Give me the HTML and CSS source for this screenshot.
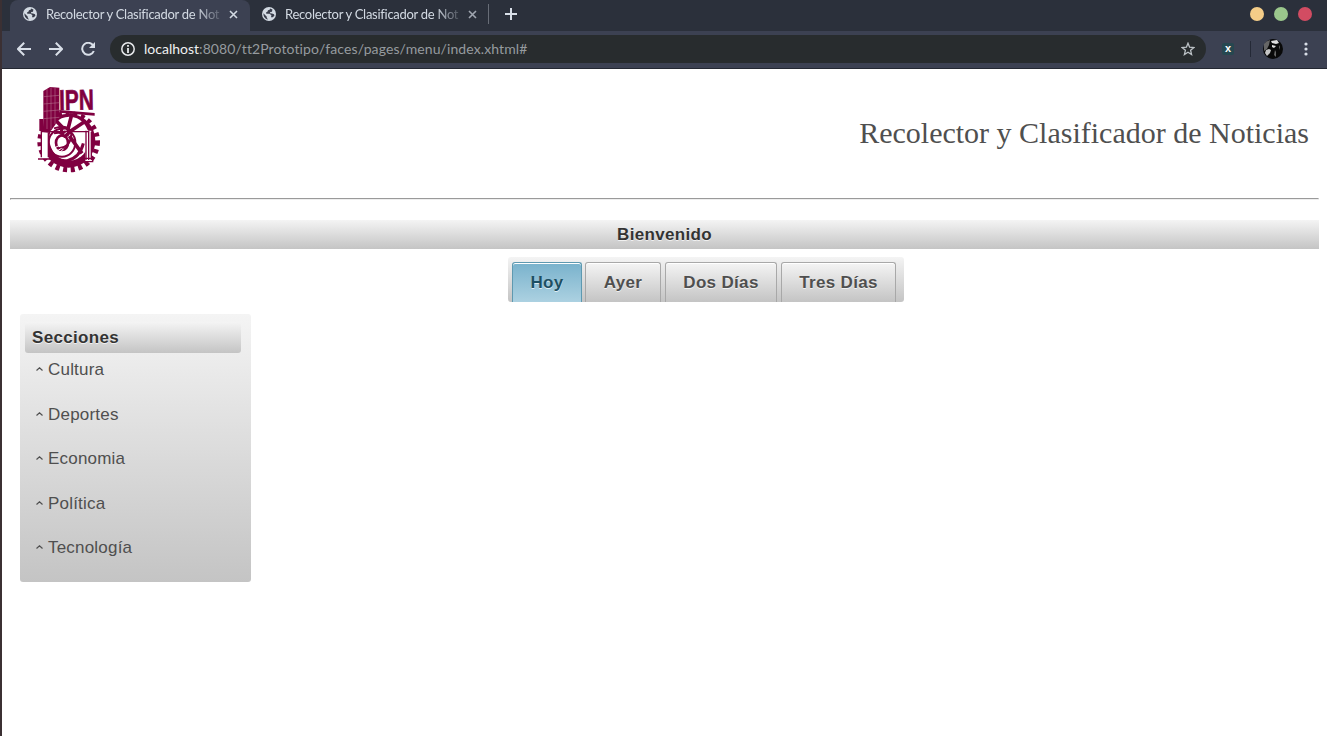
FILE: index.html
```html
<!DOCTYPE html>
<html lang="es">
<head>
<meta charset="utf-8">
<title>Recolector y Clasificador de Noticias</title>
<link rel="stylesheet" href="styles.css">
</head>
<body>
<svg class="defs" width="0" height="0">
  <symbol id="globe" viewBox="0 0 14 14"><circle cx="7" cy="7" r="7" fill="#d3dae3"/><path d="M1.4 6.3 4.8 9.7V11l1.4 1.6C3.2 12.2 1.3 9.8 1.4 6.3ZM8 1.4 7.7 2.7 6 3.3 5.4 4.8 4 5.5 4.3 6.8H7.6L9.4 8.3 9 10.2H10.8L12.4 8.8 12 7.2 10 6.6 8 6.2 8.2 5 10 4.7 10.4 2.4Z" fill="#383c4a"/></symbol>
  <symbol id="close" viewBox="0 0 9 9"><path d="m1 1 7 7M8 1 1 8" stroke="currentColor" stroke-width="1.6"/></symbol>
</svg>
<div class="window">
  <header class="browser">
    <div class="tabstrip">
      <div class="tab active"><svg class="fav"><use href="#globe"/></svg><span class="tab-title">Recolector y Clasificador de Not</span><svg class="close"><use href="#close"/></svg></div>
      <div class="tab"><svg class="fav"><use href="#globe"/></svg><span class="tab-title">Recolector y Clasificador de Not</span><svg class="close"><use href="#close"/></svg></div>
      <span class="tab-line"></span>
      <svg class="plus" viewBox="0 0 12 12"><path d="M6 0v12M0 6h12" stroke="#d9dfe8" stroke-width="2"/></svg>
      <div class="controls"><i class="yellow"></i><i class="green"></i><i class="red"></i></div>
    </div>
    <div class="toolbar">
      <svg class="nav" viewBox="0 0 14 14"><path d="M14 7H1.5M7.2 .8 1 7l6.2 6.2"/></svg>
      <svg class="nav" viewBox="0 0 14 14"><path d="M0 7h12.5M6.8 .8 13 7l-6.2 6.2"/></svg>
      <svg class="nav" viewBox="0 0 14 14"><path d="M12.2 3.5A6 6 0 1 0 12.8 9"/><path d="M14 0v6H8Z" class="tip"/></svg>
      <div class="address">
        <svg class="info" viewBox="0 0 14 14"><circle cx="7" cy="7" r="6.2" fill="none" stroke="#e8eaed" stroke-width="1.5"/><path d="M7 3v1.8M7 6v5" stroke="#e8eaed" stroke-width="1.8"/></svg>
        <span class="url"><b>localhost</b>:8080/tt2Prototipo/faces/pages/menu/index.xhtml#</span>
        <svg class="star" viewBox="0 0 14 14"><path d="m7 1.2 1.6 4 4.3.3-3.3 2.8 1 4.2L7 10.2l-3.6 2.3 1-4.2L1.1 5.5l4.3-.3Z" fill="none" stroke="#bcc2c6" stroke-width="1.3"/></svg>
      </div>
      <span class="ext">x</span>
      <span class="tool-line"></span>
      <svg class="avatar" viewBox="0 0 20 20"><circle cx="10" cy="10" r="10" fill="#090909"/><path d="M1 5Q3 2 7 1L6 6 4 10 1 12Z" fill="#666"/><path d="m8 2 6-1 2 3-3 1-4-1ZM9 6l4 1-2 2-2-1Z" fill="#ddd"/><path d="m3 11 3-1 2 1-1 3-3 3-2-3Z" fill="#c5c5c5"/><path d="m12 11 1 2v5l-2-2ZM16 6l1 2v3l-1-3Z" fill="#666"/></svg>
      <svg class="dots" viewBox="0 0 4 14"><g fill="#d9dfe8"><circle cx="2" cy="2" r="1.6"/><circle cx="2" cy="7" r="1.6"/><circle cx="2" cy="12" r="1.6"/></g></svg>
    </div>
  </header>
  <main class="page">
    <div class="masthead">
      <svg class="logo" viewBox="0 0 240 300">
        <ellipse cx="116" cy="185" rx="86" ry="84" fill="none" stroke="#800040" stroke-width="16" stroke-dasharray="12 11"/>
        <ellipse cx="116" cy="182" rx="80" ry="81" fill="#800040"/>
        <ellipse cx="118" cy="176" rx="60" ry="66" fill="#fff"/>
        <g stroke="#800040" fill="none">
          <path d="M110 155 74 118M112 155 126 100M112 160 168 122M118 168 156 220" stroke-width="11"/>
          <path d="M66 220Q82 246 112 242 150 232 160 190" stroke-width="9"/>
          <ellipse cx="96" cy="188" rx="40" ry="42" stroke-width="6"/>
          <ellipse cx="96" cy="188" rx="18" ry="22" stroke-width="8"/>
          <path d="M72 145Q121 130 124 165 121 202 86 205M72 160Q99 153 105 173" stroke-width="6"/>
        </g>
        <circle cx="105" cy="156" r="16" fill="#800040"/>
        <path d="M99 151q9-5 12 5l-8 6" fill="none" stroke="#fff" stroke-width="3"/>
        <path d="M34 155V236H56V158ZM166 152v92h18v-92Z" fill="#fff"/>
        <path d="M34 155H176V240M168 152V240M184 155V240M34 153V232M55 158V232M24 237H60M149 235H188V245H149Z" fill="none" stroke="#800040" stroke-width="4"/>
        <path d="m40 33 20-12 28 2v94l-24 34H40Z" fill="#800040"/>
        <path d="M51 27v120M63 22v126M75 24v108M40 50l48-4M40 72l48-4M40 94l48-4M40 116l48-4" stroke="#bd8199" stroke-width="1.5"/>
        <path d="M28 117h12l3 36H28ZM88 90 194 99v8L88 98Z" fill="#800040"/>
        <text x="88" y="90" class="logo-text" textLength="104" lengthAdjust="spacingAndGlyphs" transform="rotate(-1 88 90)">IPN</text>
        <path d="m68 207 20-11M75 216l20-11M87 220l13-13" stroke="#fff" stroke-width="3"/>
      </svg>
      <h1>Recolector y Clasificador de Noticias</h1>
    </div>
    <hr>
    <div class="welcome">Bienvenido</div>
    <nav class="days"><a class="selected">Hoy</a><a>Ayer</a><a>Dos Días</a><a>Tres Días</a></nav>
    <aside class="sections">
      <h2>Secciones</h2>
      <ul>
        <li><svg class="caret" viewBox="0 0 7 4"><path d="m.5 3.5 3-2.7 3 2.7"/></svg>Cultura</li>
        <li><svg class="caret" viewBox="0 0 7 4"><path d="m.5 3.5 3-2.7 3 2.7"/></svg>Deportes</li>
        <li><svg class="caret" viewBox="0 0 7 4"><path d="m.5 3.5 3-2.7 3 2.7"/></svg>Economia</li>
        <li><svg class="caret" viewBox="0 0 7 4"><path d="m.5 3.5 3-2.7 3 2.7"/></svg>Política</li>
        <li><svg class="caret" viewBox="0 0 7 4"><path d="m.5 3.5 3-2.7 3 2.7"/></svg>Tecnología</li>
      </ul>
    </aside>
  </main>
</div>
</body>
</html>
```
FILE: styles.css
```css
* { box-sizing: border-box; }
body { margin: 0; background: #fff; font-family: "Liberation Sans", Arial, sans-serif; }
svg { display: block; flex: none; }
.defs { position: absolute; }
.window { height: 736px; border-left: 2px solid #3b3033; overflow: hidden; }
.browser { height: 69px; background: #3c4152; border-bottom: 1px solid #242832; font-family: Lato, sans-serif; }
.tabstrip { height: 31px; display: flex; align-items: center; background: #2b303b; padding-left: 8px; }
.tab { height: 31px; width: 239px; display: flex; align-items: center; padding: 0 10px 3px 13px; color: #d3dae3; }
.tab.active { width: 240px; background: #3c4152; border-radius: 8px 8px 0 0; }
.fav { width: 14px; height: 14px; margin-right: 9px; }
.tab:not(.active) .fav { margin-left: -1px; }
.tab-title { width: 176px; white-space: nowrap; font-size: 13px; letter-spacing: -.28px; -webkit-mask-image: linear-gradient(90deg, #000 150px, transparent 180px); mask-image: linear-gradient(90deg, #000 150px, transparent 180px); }
.close { width: 9px; height: 9px; margin-left: 7px; }
.tab:not(.active) .close { color: #a0a6b0; }
.tab-line { width: 1px; height: 20px; background: #686d77; margin: 0 16px 3px -1px; }
.plus { width: 12px; height: 12px; margin-bottom: 3px; }
.controls { display: flex; gap: 10px; margin: 0 15px 3px auto; }
.controls i { width: 14px; height: 14px; border-radius: 50%; }
.yellow { background: #f5cd88; }
.green { background: #9bc78c; }
.red { background: #d24c62; }
.toolbar { height: 37px; display: flex; align-items: center; padding: 0 0 1px 15px; }
.nav { width: 14px; height: 14px; margin-right: 18px; fill: none; stroke: #d9dfe8; stroke-width: 2; }
.nav .tip { fill: #d9dfe8; stroke: none; }
.address { width: 1096px; height: 28px; margin-left: -3px; border-radius: 14px; background: #282c2e; display: flex; align-items: center; padding: 0 11px; }
.info { width: 14px; height: 14px; margin-right: 9px; }
.url { flex: 1; padding-bottom: 1px; font-size: 14px; color: #969b9f; letter-spacing: .1px; white-space: nowrap; }
.url b { color: #f0f1f2; font-weight: 400; letter-spacing: 0; }
.star { width: 14px; height: 14px; }
.ext { width: 12px; height: 12px; margin-left: 16px; border-radius: 2px; background: #264750; color: #fff; font: bold 11px/10px "Liberation Sans", sans-serif; text-align: center; }
.tool-line { width: 1px; height: 16px; margin: 0 12px 0 16px; background: #242936; }
.avatar { width: 20px; height: 20px; }
.dots { width: 4px; height: 14px; margin-left: 21px; }
.page { padding: 0 8px; color: #4f4f4f; }
.masthead { height: 129px; display: flex; align-items: flex-start; justify-content: space-between; padding: 11px 10px 0 20px; }
.logo { width: 80px; height: 100px; }
.logo-text { font: bold 86px "Liberation Sans", sans-serif; fill: #800040; stroke: #800040; stroke-width: 2px; }
h1 { margin: 35px 0 0; font: 400 30px/35px "Liberation Serif", serif; white-space: nowrap; }
hr { height: 2px; margin: 0; border: 1px solid #eee; border-top-color: #9a9a9a; border-left-color: #9a9a9a; }
.welcome { height: 29px; margin-top: 20px; background: linear-gradient(#f4f4f4, #c4c4c4); color: #333; font-size: 17px; letter-spacing: .33px; font-weight: 700; line-height: 29px; text-align: center; text-shadow: 0 1px 0 rgba(255,255,255,.7); }
.days { width: 396px; height: 45px; margin: 8px 0 0 498px; padding: 5px 4px 0; border-radius: 3px; display: flex; background: linear-gradient(#f4f4f4, #c4c4c4); font-size: 17px; letter-spacing: .33px; font-weight: 700; }
.days a { height: 40px; border: 1px solid #a8a8a8; border-bottom: 0; border-radius: 3px 3px 0 0; background: linear-gradient(#f4f4f4, #c4c4c4); box-shadow: inset 0 1px 0 #fff; line-height: 39px; text-align: center; text-shadow: 0 1px 0 rgba(255,255,255,.7); white-space: nowrap; width: 76px; margin-right: 4px; }
.days a:nth-child(3) { width: 112px; }
.days a:nth-child(4) { width: 115px; margin: 0; }
.days .selected { width: 70px; margin-right: 3px; color: #1c4f63; border-color: #5e99b0; background: linear-gradient(#79b2cc, #acd1e1); }
.sections { width: 231px; height: 268px; margin: 12px 0 0 10px; padding: 8px 10px 0 5px; border-radius: 3px; background: linear-gradient(#f4f4f4, #c4c4c4); }
h2 { height: 31px; margin: 0; padding-left: 7px; border-radius: 3px; background: linear-gradient(#f4f4f4, #c4c4c4); color: #333; font-size: 17px; letter-spacing: .33px; line-height: 31px; text-shadow: 0 1px 0 rgba(255,255,255,.7); }
ul { list-style: none; margin: 0; padding: 6px 0 0 11px; font-size: 17px; letter-spacing: .2px; }
li { height: 44.5px; line-height: 21px; display: flex; }
.caret { width: 7px; height: 4px; margin: 8px 5px 0 0; fill: none; stroke: #4f4f4f; stroke-width: 1.2; }
```
